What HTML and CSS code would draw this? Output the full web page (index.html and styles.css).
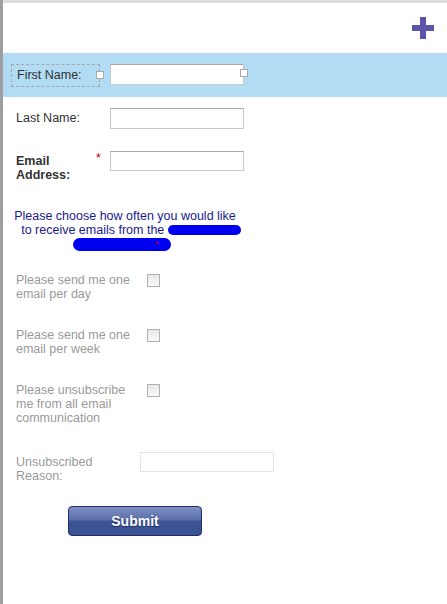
FILE: index.html
```html
<!DOCTYPE html>
<html lang="en">
<head>
    <meta charset="UTF-8">
    <meta name="viewport" content="width=device-width, initial-scale=1.0">
    <title>Email Preferences</title>
    <link rel="stylesheet" href="styles.css">
</head>
<body>

<div class="page">
    <div class="topbar"></div>
    <div class="header">
        <svg class="plus" width="22" height="22" viewBox="0 0 22 22">
            <rect x="8" y="0" width="6" height="22" fill="#5b55a8"/>
            <rect x="0" y="8" width="22" height="6" fill="#5b55a8"/>
        </svg>
    </div>

    <div class="band">
        <div class="label-box">First Name:<span class="handle handle-left"></span></div>
        <div class="input-wrap">
            <input type="text" class="field">
            <span class="handle handle-right"></span>
        </div>
    </div>

    <div class="row row-last">
        <label class="label">Last Name:</label>
        <input type="text" class="field">
    </div>

    <div class="row row-email">
        <label class="label bold">Email<br>Address:</label>
        <span class="star">*</span>
        <input type="text" class="field">
    </div>

    <p class="intro">
        Please choose how often you would like<br>
        to receive emails from the <span class="scribble s1"></span><br>
        <span class="scribble s2"></span><span class="tiny-star">*</span>
    </p>

    <div class="check-row first">
        <span class="check-label">Please send me one email per day</span>
        <span class="box"></span>
    </div>
    <div class="check-row">
        <span class="check-label">Please send me one email per week</span>
        <span class="box"></span>
    </div>
    <div class="check-row">
        <span class="check-label">Please unsubscribe me from all email communication</span>
        <span class="box"></span>
    </div>

    <div class="reason-row">
        <span class="check-label">Unsubscribed Reason:</span>
        <input type="text" class="field field-light">
    </div>

    <button class="submit">Submit</button>
</div>

</body>
</html>
```

FILE: styles.css
```css
body {
    margin: 0;
    font-family: "Liberation Sans", Arial, sans-serif;
    font-size: 12.5px;
    color: #333;
    background: #fff;
}
.page {
    border-left: 3px solid #9e9ea2;
    min-height: 604px;
    box-sizing: border-box;
}
.topbar {
    height: 3px;
    background: #dcdcdc;
}
.header {
    height: 50px;
    display: flex;
    justify-content: flex-end;
    align-items: flex-start;
    padding-right: 13px;
    box-sizing: border-box;
    padding-top: 14px;
}
.band {
    background: #b1dcf4;
    height: 44px;
    display: flex;
    align-items: flex-start;
    padding: 11px 0 0 8px;
    box-sizing: border-box;
}
.label-box {
    position: relative;
    width: 89px;
    height: 23px;
    border: 1px dashed #a8a8a8;
    box-sizing: border-box;
    padding-left: 5px;
    line-height: 21px;
    color: #333;
}
.handle {
    position: absolute;
    width: 6px;
    height: 6px;
    background: #fff;
    border: 1px solid #aaa;
}
.handle-left {
    right: -5px;
    top: 6px;
}
.input-wrap {
    position: relative;
    margin-left: 10px;
}
.handle-right {
    right: -4px;
    top: 5px;
}
.field {
    display: block;
    flex: none;
    width: 134px;
    height: 21px;
    box-sizing: border-box;
    border: 1px solid #c8c8c8;
    border-top-color: #a8a8a8;
    background: #fff;
    margin: 0;
    padding: 2px 4px;
    font: inherit;
}
.row {
    display: flex;
    align-items: flex-start;
    padding-left: 13px;
}
.label {
    flex: none;
    width: 94px;
    line-height: 14px;
    color: #333;
}
.bold {
    font-weight: bold;
}
.row-last {
    margin-top: 11px;
}
.row-last .label {
    padding-top: 3px;
}
.row-email {
    margin-top: 22px;
}
.row-email .label {
    width: 80px;
    padding-top: 3px;
}
.star {
    flex: none;
    width: 14px;
    color: #cc0000;
    line-height: 14px;
}
.row-email .field {
    height: 20px;
}
.intro {
    margin: 27px 0 0 11px;
    width: 222px;
    white-space: nowrap;
    text-align: center;
    color: #1a1a8c;
    line-height: 14px;
}
.scribble {
    display: inline-block;
    background: #0000f0;
    border-radius: 8px;
    vertical-align: middle;
}
.s1 {
    width: 73px;
    height: 10px;
    margin-top: -2px;
    margin-right: -12px;
}
.s2 {
    width: 98px;
    height: 13px;
    margin-left: -18px;
}
.tiny-star {
    color: #cc0000;
    font-size: 9px;
    vertical-align: top;
    margin-left: -16px;
}
.check-row {
    display: flex;
    align-items: flex-start;
    padding-left: 13px;
    margin-top: 19px;
    height: 36px;
}
.check-row.first {
    margin-top: 22px;
}
.check-label {
    flex: none;
    width: 118px;
    color: #9a9a9a;
    line-height: 14px;
}
.box {
    width: 11px;
    height: 11px;
    border: 1px solid #b0b0b0;
    background: linear-gradient(#e8e8e8, #fafafa);
    margin: 1px 0 0 13px;
}
.reason-row {
    display: flex;
    align-items: flex-start;
    padding-left: 13px;
    margin-top: 33px;
}
.reason-row .check-label {
    padding-top: 3px;
    width: 118px;
    margin-right: 6px;
}
.field-light {
    border-color: #e4e4e4;
    height: 20px;
}
.submit {
    display: block;
    margin: 23px 0 0 65px;
    width: 134px;
    height: 30px;
    border: 1px solid #1f2e66;
    border-radius: 4px;
    background: linear-gradient(#8190c4 0%, #5a6fa8 45%, #3b5394 52%, #3a5292 100%);
    color: #fff;
    font: bold 14px "Liberation Sans", Arial, sans-serif;
    text-shadow: 0 1px 1px #1d2b5c;
}
```
